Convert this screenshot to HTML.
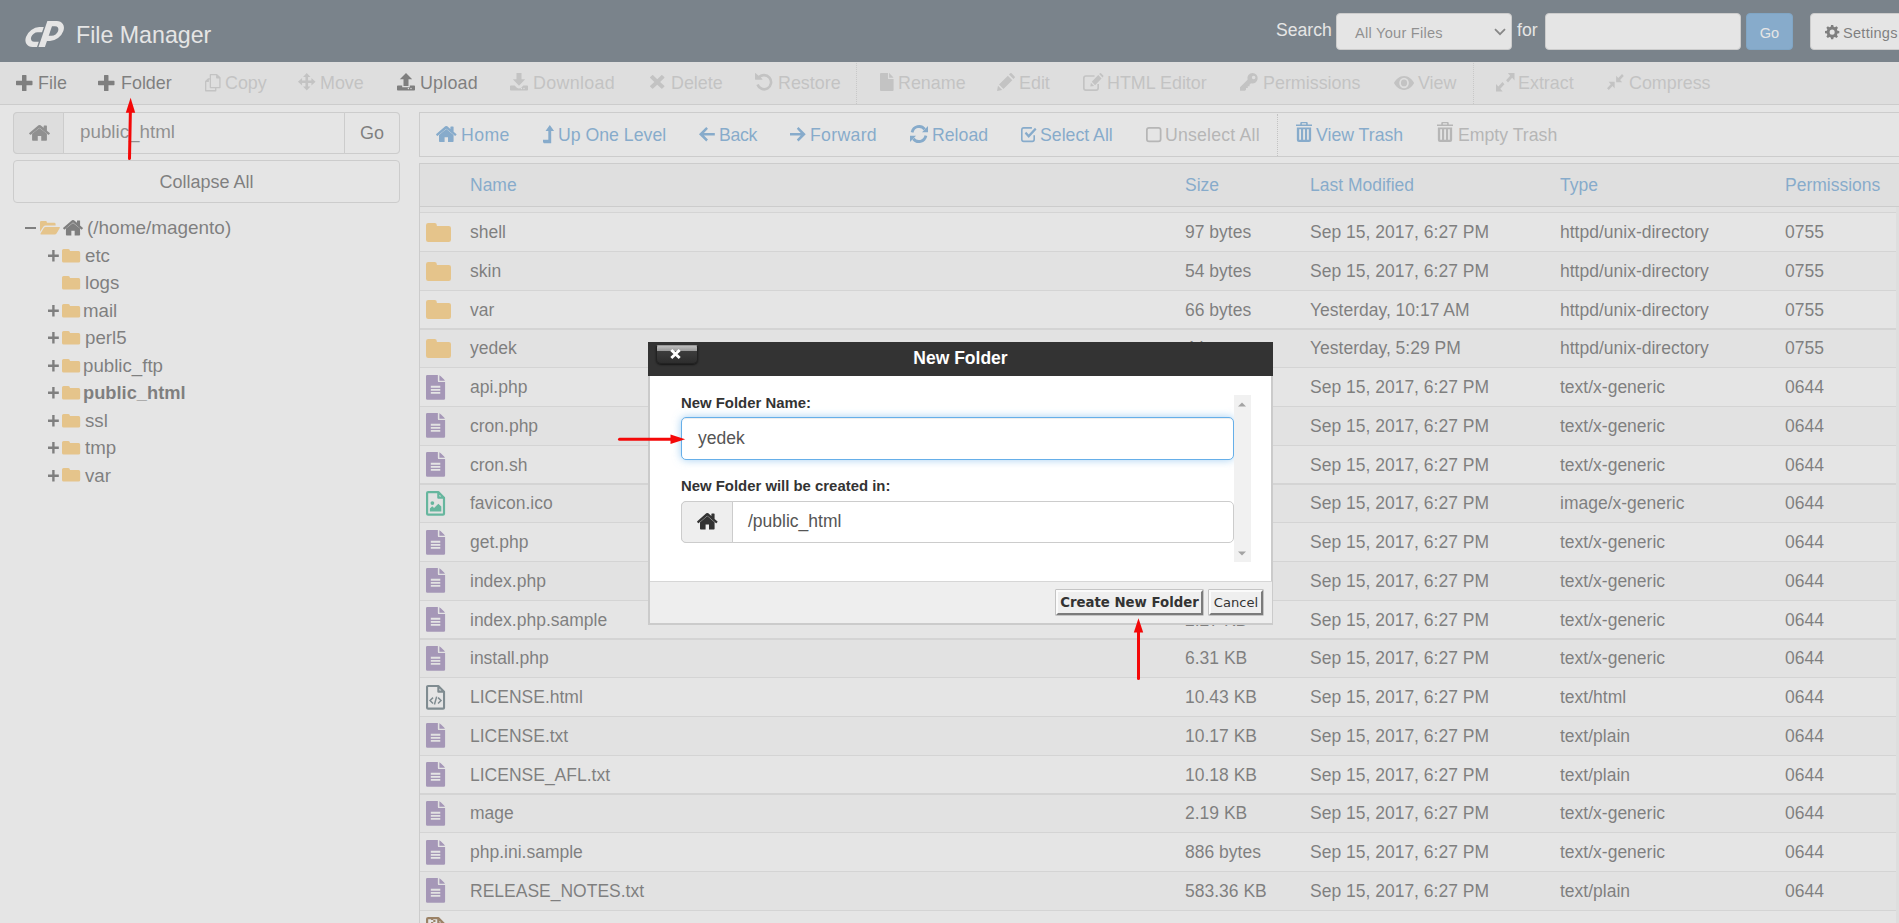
<!DOCTYPE html><html lang="en"><head><meta charset="utf-8"><title>cPanel File Manager</title><style>
*{box-sizing:border-box;margin:0;padding:0}
html,body{width:1899px;height:923px;overflow:hidden;background:#fff}
body{font-family:"Liberation Sans",sans-serif;color:#333;position:relative}
.abs{position:absolute;white-space:nowrap}
.os{font-family:"Liberation Sans",sans-serif;font-size:18px}
#hdr{left:0;top:0;width:1899px;height:62px;background:#293a4a}
#tb{left:0;top:62px;width:1899px;height:43px;background:#f1f1f1;border-bottom:1px solid #ccc}
.tbi{top:63px;height:42px;line-height:41px;font-size:17.900px;color:#333}
.tbi.dis{color:#bababa}
.nvi{top:114px;height:43px;line-height:43px;font-size:17.700px;color:#428bca}
.th{top:165px;height:42px;line-height:41px;font-size:17.500px;color:#428bca}
.row{left:420px;width:1476px;height:38.750px;border-bottom:1px solid #ddd}
.row.odd{background:#f9f9f9}
.c{position:absolute;top:0px;height:37.750px;line-height:38px;font-size:17.500px;white-space:nowrap;color:#333}
.tr{font-size:18.700px;height:27px;line-height:27px;color:#333}
svg{display:block;overflow:visible}
</style></head><body>
<div id="hdr" class="abs">
<svg width="38" height="26" viewBox="0 0 38 26" style="position:absolute;left:25.800px;top:20.500px"><g transform="translate(0,26) skewX(-18.800) translate(0,-26)" fill="none" stroke="#fff"><path d="M11 8.700H6.550A7.350 7.350 0 0 0 6.550 23.400H11" stroke-width="5.200"/><path d="M15.700 0V26" stroke-width="6.400"/><path d="M15.700 2.600H21.900A7.400 7.400 0 0 1 21.900 17.400H17" stroke-width="5.200"/></g></svg>
<div class="abs" style="left:76px;top:14px;height:42px;line-height:42px;font-size:23.200px;color:#fff">File Manager</div>
<div class="abs" style="left:1276px;top:11px;height:38px;line-height:38px;font-size:17.600px;color:#fff">Search</div>
<div class="abs" style="left:1336px;top:13px;width:176px;height:37px;background:#fff;border:1px solid #ccc;border-radius:4px"></div>
<div class="abs" style="left:1355px;top:15px;height:37px;line-height:37px;font-size:14.600px;letter-spacing:.25px;color:#555">All Your Files</div>
<svg width="12" height="8" viewBox="0 0 12 8" style="position:absolute;left:1494px;top:28px"><path d="M1 1.200l5 5 5-5" fill="none" stroke="#444" stroke-width="1.800"/></svg>
<div class="abs" style="left:1517px;top:11px;height:38px;line-height:38px;font-size:17.600px;color:#fff">for</div>
<div class="abs" style="left:1545px;top:13px;width:196px;height:37px;background:#fff;border:1px solid #ccc;border-radius:4px"></div>
<div class="abs" style="left:1746px;top:13px;width:47px;height:37px;background:#428bca;border:1px solid #357ebd;border-radius:4px;color:#fff;font-size:14.600px;line-height:38px;text-align:center">Go</div>
<div class="abs" style="left:1810px;top:13px;width:100px;height:37px;background:#fff;border:1px solid #ccc;border-radius:4px"></div>
<svg width="14.3" height="14.3" viewBox="0.10 0.10 15.80 15.80" preserveAspectRatio="none" style="position:absolute;left:1824.8px;top:24.8px;color:#333;"><path fill="currentColor" fill-rule="evenodd" d="M6.80 0.09L9.20 0.09L9.57 2.11L11.06 2.72L12.75 1.56L14.44 3.25L13.28 4.94L13.89 6.43L15.91 6.80L15.91 9.20L13.89 9.57L13.28 11.06L14.44 12.75L12.75 14.44L11.06 13.28L9.57 13.89L9.20 15.91L6.80 15.91L6.43 13.89L4.94 13.28L3.25 14.44L1.56 12.75L2.72 11.06L2.11 9.57L0.09 9.20L0.09 6.80L2.11 6.43L2.72 4.94L1.56 3.25L3.25 1.56L4.94 2.72L6.43 2.11zM8 5.200a2.800 2.800 0 1 0 0 5.600 2.800 2.800 0 1 0 0-5.600z"/></svg>
<div class="abs" style="left:1843px;top:15px;height:37px;line-height:37px;font-size:14.600px;letter-spacing:.25px;color:#333">Settings</div>
</div>
<div id="tb" class="abs"></div>
<svg width="16.5" height="16" viewBox="1.00 1.00 14.00 14.00" preserveAspectRatio="none" style="position:absolute;left:16.4px;top:74.7px;color:#333;"><path fill="currentColor" d="M6.600 1h2.800a.5.5 0 0 1 .5.5v4.600h4.600a.5.5 0 0 1 .5.5v2.800a.5.5 0 0 1-.5.5h-4.600v4.600a.5.5 0 0 1-.5.5H6.600a.5.5 0 0 1-.5-.5v-4.600H1.500a.5.5 0 0 1-.5-.5V6.600a.5.5 0 0 1 .5-.5h4.600V1.500a.5.5 0 0 1 .5-.5z"/></svg>
<div class="abs tbi" style="left:38px">File</div>
<svg width="16.5" height="16" viewBox="1.00 1.00 14.00 14.00" preserveAspectRatio="none" style="position:absolute;left:98.4px;top:74.7px;color:#333;"><path fill="currentColor" d="M6.600 1h2.800a.5.5 0 0 1 .5.5v4.600h4.600a.5.5 0 0 1 .5.5v2.800a.5.5 0 0 1-.5.5h-4.600v4.600a.5.5 0 0 1-.5.5H6.600a.5.5 0 0 1-.5-.5v-4.600H1.500a.5.5 0 0 1-.5-.5V6.600a.5.5 0 0 1 .5-.5h4.600V1.500a.5.5 0 0 1 .5-.5z"/></svg>
<div class="abs tbi" style="left:121px">Folder</div>
<svg width="15.6" height="17.4" viewBox="0.00 0.00 15.40 17.65" preserveAspectRatio="none" style="position:absolute;left:205px;top:73.5px;color:#bababa;"><path fill="none" stroke="currentColor" stroke-width="1.300" stroke-linejoin="round" d="M5.300.650H11.600L14.750 3.800V13.750H5.300zM11.600.650V3.800H14.750M5.300 4.900H3.200L.650 7.500V17H10.600V13.750M3.200 4.900V7.500H.650"/></svg>
<div class="abs tbi dis" style="left:225px">Copy</div>
<svg width="17.5" height="17.5" viewBox="0.05 0.05 17.40 17.40" preserveAspectRatio="none" style="position:absolute;left:298.2px;top:73.2px;color:#bababa;"><path fill="currentColor" d="M8.750 0l3.700 4.100h-2.400v3.350h3.350v-2.400l4.100 3.700-4.100 3.700v-2.400h-3.350v3.350h2.400l-3.700 4.100-3.700-4.100h2.400v-3.350H4.100v2.400L0 8.750l4.100-3.700v2.400h3.350V4.100h-2.400z"/></svg>
<div class="abs tbi dis" style="left:320px">Move</div>
<svg width="18" height="17.5" viewBox="0.00 0.05 18.00 17.45" preserveAspectRatio="none" style="position:absolute;left:397px;top:73.4px;color:#333;"><path fill="currentColor" d="M9 0l6.200 6.300h-3.700v6.600h-5V6.300H2.800z"/><path fill="currentColor" d="M.8 12.400h4.400v1.800h7.600v-1.800h4.400q.8 0 .8.800v3.500q0 .8-.8.800H.8q-.8 0-.8-.8v-3.500q0-.8.8-.8zm12.500 3.100a.7.700 0 1 0 1.400 0 .7.700 0 1 0-1.400 0zm-2.600 0a.7.700 0 1 0 1.400 0 .7.700 0 1 0-1.400 0z" fill-rule="evenodd"/></svg>
<div class="abs tbi" style="left:420px;letter-spacing:0.20px">Upload</div>
<svg width="18" height="17.5" viewBox="0.00 0.00 18.00 17.50" preserveAspectRatio="none" style="position:absolute;left:510px;top:73.4px;color:#bababa;"><path fill="currentColor" d="M6.500 0h5v6.300h3.700L9 12.800 2.800 6.300h3.700z"/><path fill="currentColor" d="M.8 12.400h3.800l2.300 2.300q2.100 1.600 4.200 0l2.300-2.300h3.800q.8 0 .8.800v3.500q0 .8-.8.800H.8q-.8 0-.8-.8v-3.500q0-.8.8-.8zm12.500 3.100a.7.700 0 1 0 1.400 0 .7.700 0 1 0-1.400 0zm-2.600 0a.7.700 0 1 0 1.400 0 .7.700 0 1 0-1.400 0z" fill-rule="evenodd"/></svg>
<div class="abs tbi dis" style="left:533px;letter-spacing:0.30px">Download</div>
<svg width="14.5" height="13.8" viewBox="0.25 0.25 15.50 15.50" preserveAspectRatio="none" style="position:absolute;left:649.8px;top:75.2px;color:#bababa;"><path fill="currentColor" d="M3.600.5L8 4.900 12.400.5q.5-.5 1 0l2.100 2.100q.5.500 0 1L11.100 8l4.400 4.400q.5.500 0 1l-2.100 2.100q-.5.500-1 0L8 11.100l-4.400 4.400q-.5.500-1 0L.5 13.400q-.5-.5 0-1L4.900 8 .5 3.600q-.5-.5 0-1L2.600.5q.5-.5 1 0z"/></svg>
<div class="abs tbi dis" style="left:671px">Delete</div>
<svg width="17.4" height="17.6" viewBox="0.40 0.80 16.50 16.40" preserveAspectRatio="none" style="position:absolute;left:754.7px;top:73px;color:#bababa;"><path fill="none" stroke="currentColor" stroke-width="2.500" d="M3.900 5.200A6.600 6.600 0 1 1 2.800 11.500"/><path fill="currentColor" d="M.400 1.300q0-.8.700-.300L7.400 6.500q.4.500-.3.500H.900q-.5 0-.5-.5z"/></svg>
<div class="abs tbi dis" style="left:778px">Restore</div>
<svg width="13.6" height="18" viewBox="0.00 0.00 13.00 16.00" preserveAspectRatio="none" style="position:absolute;left:880px;top:73px;color:#bababa;"><path fill="currentColor" d="M.9 0h6.700v4.600q0 .8.800.8H13v9.700q0 .9-.9.900H.9q-.9 0-.9-.9V.9Q0 0 .9 0z"/><path fill="currentColor" d="M8.700.1q.5.200 1 .7l2.500 2.500q.5.500.7 1H8.700z"/></svg>
<div class="abs tbi dis" style="left:898px">Rename</div>
<svg width="18" height="18" viewBox="0.00 0.10 15.90 15.90" preserveAspectRatio="none" style="position:absolute;left:997px;top:73px;color:#bababa;"><path fill="currentColor" d="M0 16l.9-4.600 3.700 3.700zM1.800 10.300l7.800-7.800 3.900 3.900-7.800 7.800zM10.600 1.500l1.100-1.100q.6-.6 1.200 0l2.700 2.700q.6.600 0 1.200l-1.100 1.100z"/></svg>
<div class="abs tbi dis" style="left:1019px">Edit</div>
<svg width="20.5" height="18" viewBox="0.05 0.05 18.60 15.80" preserveAspectRatio="none" style="position:absolute;left:1083px;top:73px;color:#bababa;"><path fill="none" stroke="currentColor" stroke-width="1.500" d="M13.800 9.800v3.400q0 1.900-1.900 1.900H2.700q-1.900 0-1.900-1.900V4.600q0-1.900 1.900-1.900h7.800"/><path fill="currentColor" d="M6.700 11.800l.5-3.300 3 3zM8 7.700l5.900-5.900 3 3L11 10.700zM14.700 1l.7-.7q.5-.5 1 0l2 2q.5.500 0 1l-.7.700z"/></svg>
<div class="abs tbi dis" style="left:1107px">HTML Editor</div>
<svg width="17.7" height="17.8" viewBox="0.00 0.00 15.95 16.00" preserveAspectRatio="none" style="position:absolute;left:1240.3px;top:73.2px;color:#bababa;"><path fill="currentColor" fill-rule="evenodd" d="M11.300 0a4.700 4.700 0 1 1-1.400 9.200L8.600 10.500v1.400H7v1.600H5.400v1.600l-.9.900H.600Q0 16 0 15.400v-2.600l6.800-6.800A4.700 4.700 0 0 1 11.300 0zm1 2.500a1.600 1.600 0 1 0 0 3.200 1.600 1.600 0 1 0 0-3.200z"/></svg>
<div class="abs tbi dis" style="left:1263px">Permissions</div>
<svg width="20.1" height="13.9" viewBox="0.20 0.80 19.60 12.40" preserveAspectRatio="none" style="position:absolute;left:1393.9px;top:75.5px;color:#bababa;"><path fill="currentColor" fill-rule="evenodd" d="M10 .8C14.400.8 18.200 3.900 19.800 7 18.200 10.100 14.400 13.200 10 13.200S1.800 10.100.200 7C1.800 3.900 5.600.8 10 .8zM10 2.300a4.700 4.700 0 1 0 0 9.400 4.700 4.700 0 1 0 0-9.400zM10 4a3 3 0 1 1 0 6 3 3 0 1 1 0-6z"/></svg>
<div class="abs tbi dis" style="left:1418px">View</div>
<svg width="18.5" height="18.4" viewBox="0.00 0.00 18.00 16.00" preserveAspectRatio="none" style="position:absolute;left:1495.9px;top:72.6px;color:#bababa;"><path fill="currentColor" d="M11.500 0H18v6.500l-2.300-2.300-4 4-1.900-1.900 4-4zM6.500 16H0V9.500l2.300 2.300 4-4 1.900 1.900-4 4z"/></svg>
<div class="abs tbi dis" style="left:1518px">Extract</div>
<svg width="16.8" height="16.1" viewBox="0.00 0.00 18.00 16.00" preserveAspectRatio="none" style="position:absolute;left:1607.2px;top:73.9px;color:#bababa;"><path fill="currentColor" d="M9.800 8.200V1.700l2.300 2.300 4-4L18 1.900l-4 4 2.300 2.300zM8.200 7.800v6.500l-2.300-2.300-4 4L0 14.100l4-4-2.300-2.300z"/></svg>
<div class="abs tbi dis" style="left:1629px">Compress</div>
<div class="abs" style="left:856px;top:63px;width:0;height:41px;border-left:1px dotted #c4c4c4"></div>
<div class="abs" style="left:1473px;top:63px;width:0;height:41px;border-left:1px dotted #c4c4c4"></div>
<div class="abs" style="left:13px;top:112px;width:387px;height:42px;border:1px solid #ccc;border-radius:4px;background:#fff"></div>
<div class="abs" style="left:13px;top:112px;width:51px;height:42px;border:1px solid #ccc;border-radius:4px 0 0 4px;background:#eee"></div>
<svg width="21" height="15.8" viewBox="0.95 0.60 18.10 14.40" preserveAspectRatio="none" style="position:absolute;left:28.6px;top:124.7px;color:#555;"><path fill="currentColor" d="M10 3.300l6.400 5.300v5.700q0 .7-.7.700h-4.200v-4.300h-3v4.300H4.300q-.7 0-.7-.7V8.600z"/><path fill="currentColor" d="M10 .6q.5 0 .9.300l2.700 2.300V1.400q0-.4.400-.4h2q.4 0 .4.400v4.400l2.400 2q.4.300.1.700l-.7.800q-.3.300-.7.100L10 3 2.500 9.400q-.4.300-.7-.1l-.7-.8q-.3-.4.100-.7L9.100.9q.4-.3.900-.3z"/></svg>
<div class="abs" style="left:80px;top:112px;height:41px;line-height:39px;font-size:18.800px;color:#555">public_html</div>
<div class="abs" style="left:344px;top:112px;width:56px;height:42px;border:1px solid #ccc;border-radius:0 4px 4px 0;background:#fff;font-size:18px;line-height:41px;text-align:center;color:#333">Go</div>
<div class="abs" style="left:13px;top:160px;width:387px;height:43px;border:1px solid #ccc;border-radius:4px;background:#fff;font-size:18px;line-height:43px;text-align:center;color:#333">Collapse All</div>
<div class="abs" style="left:25px;top:226.600px;width:10.700px;height:2.500px;background:#333"></div>
<svg width="20" height="13.4" viewBox="0.00 0.80 19.50 13.40" preserveAspectRatio="none" style="position:absolute;left:40px;top:221.4px;color:#ffbc4a;"><path fill="currentColor" d="M0 2Q0 .8 1.2.8h4.300q1.200 0 1.200 1.200v.6h7.300q1.200 0 1.200 1.200v1.400H5.600q-1.600 0-2.400 1.300L0 11.500z"/><path fill="currentColor" d="M.5 13.200l3.400-5.600q.5-.9 1.600-.9h13.200q1.200 0 .6 1l-3.200 5.500q-.6 1-1.800 1H1.100q-1.100 0-.6-1z"/></svg>
<svg width="20" height="15.4" viewBox="0.95 0.60 18.10 14.40" preserveAspectRatio="none" style="position:absolute;left:63px;top:220.2px;color:#333;"><path fill="currentColor" d="M10 3.300l6.400 5.300v5.700q0 .7-.7.700h-4.200v-4.300h-3v4.300H4.300q-.7 0-.7-.7V8.600z"/><path fill="currentColor" d="M10 .6q.5 0 .9.300l2.700 2.300V1.400q0-.4.400-.4h2q.4 0 .4.400v4.400l2.400 2q.4.300.1.700l-.7.800q-.3.300-.7.100L10 3 2.500 9.400q-.4.300-.7-.1l-.7-.8q-.3-.4.100-.7L9.100.9q.4-.3.900-.3z"/></svg>
<div class="abs tr" style="left:87px;top:214px;font-size:18.950px">(/home/magento)</div>
<svg width="11" height="12" viewBox="0 0 11 12" style="position:absolute;left:48px;top:250.10px"><path d="M0 5.800h10.800M5.400 0v11.600" stroke="#333" stroke-width="2.400" fill="none"/></svg>
<svg width="18.2" height="13.6" viewBox="0.00 0.60 18.00 13.80" preserveAspectRatio="none" style="position:absolute;left:62px;top:248.80px;color:#ffbc4a;"><path fill="currentColor" d="M0 2.2Q0 .6 1.6.6h4.6q1.6 0 1.6 1.6v.5h8.6q1.6 0 1.6 1.6v8.5q0 1.6-1.6 1.6H1.6Q0 14.4 0 12.8z"/></svg>
<div class="abs tr" style="left:85px;top:242px;">etc</div>
<svg width="18.2" height="13.6" viewBox="0.00 0.60 18.00 13.80" preserveAspectRatio="none" style="position:absolute;left:62px;top:276.25px;color:#ffbc4a;"><path fill="currentColor" d="M0 2.2Q0 .6 1.6.6h4.6q1.6 0 1.6 1.6v.5h8.6q1.6 0 1.6 1.6v8.5q0 1.6-1.6 1.6H1.6Q0 14.4 0 12.8z"/></svg>
<div class="abs tr" style="left:85px;top:269px;">logs</div>
<svg width="11" height="12" viewBox="0 0 11 12" style="position:absolute;left:48px;top:305.00px"><path d="M0 5.800h10.800M5.400 0v11.600" stroke="#333" stroke-width="2.400" fill="none"/></svg>
<svg width="18.2" height="13.6" viewBox="0.00 0.60 18.00 13.80" preserveAspectRatio="none" style="position:absolute;left:62px;top:303.70px;color:#ffbc4a;"><path fill="currentColor" d="M0 2.2Q0 .6 1.6.6h4.6q1.6 0 1.6 1.6v.5h8.6q1.6 0 1.6 1.6v8.5q0 1.6-1.6 1.6H1.6Q0 14.4 0 12.8z"/></svg>
<div class="abs tr" style="left:83px;top:297px;">mail</div>
<svg width="11" height="12" viewBox="0 0 11 12" style="position:absolute;left:48px;top:332.45px"><path d="M0 5.800h10.800M5.400 0v11.600" stroke="#333" stroke-width="2.400" fill="none"/></svg>
<svg width="18.2" height="13.6" viewBox="0.00 0.60 18.00 13.80" preserveAspectRatio="none" style="position:absolute;left:62px;top:331.15px;color:#ffbc4a;"><path fill="currentColor" d="M0 2.2Q0 .6 1.6.6h4.6q1.6 0 1.6 1.6v.5h8.6q1.6 0 1.6 1.6v8.5q0 1.6-1.6 1.6H1.6Q0 14.4 0 12.8z"/></svg>
<div class="abs tr" style="left:85px;top:324px;">perl5</div>
<svg width="11" height="12" viewBox="0 0 11 12" style="position:absolute;left:48px;top:359.90px"><path d="M0 5.800h10.800M5.400 0v11.600" stroke="#333" stroke-width="2.400" fill="none"/></svg>
<svg width="18.2" height="13.6" viewBox="0.00 0.60 18.00 13.80" preserveAspectRatio="none" style="position:absolute;left:62px;top:358.60px;color:#ffbc4a;"><path fill="currentColor" d="M0 2.2Q0 .6 1.6.6h4.6q1.6 0 1.6 1.6v.5h8.6q1.6 0 1.6 1.6v8.5q0 1.6-1.6 1.6H1.6Q0 14.4 0 12.8z"/></svg>
<div class="abs tr" style="left:83px;top:352px;">public_ftp</div>
<svg width="11" height="12" viewBox="0 0 11 12" style="position:absolute;left:48px;top:387.35px"><path d="M0 5.800h10.800M5.400 0v11.600" stroke="#333" stroke-width="2.400" fill="none"/></svg>
<svg width="18.2" height="13.6" viewBox="0.00 0.60 18.00 13.80" preserveAspectRatio="none" style="position:absolute;left:62px;top:386.05px;color:#ffbc4a;"><path fill="currentColor" d="M0 2.2Q0 .6 1.6.6h4.6q1.6 0 1.6 1.6v.5h8.6q1.6 0 1.6 1.6v8.5q0 1.6-1.6 1.6H1.6Q0 14.4 0 12.8z"/></svg>
<div class="abs tr" style="left:83px;top:379px;font-weight:bold;font-size:18.300px;">public_html</div>
<svg width="11" height="12" viewBox="0 0 11 12" style="position:absolute;left:48px;top:414.80px"><path d="M0 5.800h10.800M5.400 0v11.600" stroke="#333" stroke-width="2.400" fill="none"/></svg>
<svg width="18.2" height="13.6" viewBox="0.00 0.60 18.00 13.80" preserveAspectRatio="none" style="position:absolute;left:62px;top:413.50px;color:#ffbc4a;"><path fill="currentColor" d="M0 2.2Q0 .6 1.6.6h4.6q1.6 0 1.6 1.6v.5h8.6q1.6 0 1.6 1.6v8.5q0 1.6-1.6 1.6H1.6Q0 14.4 0 12.8z"/></svg>
<div class="abs tr" style="left:85px;top:407px;">ssl</div>
<svg width="11" height="12" viewBox="0 0 11 12" style="position:absolute;left:48px;top:442.25px"><path d="M0 5.800h10.800M5.400 0v11.600" stroke="#333" stroke-width="2.400" fill="none"/></svg>
<svg width="18.2" height="13.6" viewBox="0.00 0.60 18.00 13.80" preserveAspectRatio="none" style="position:absolute;left:62px;top:440.95px;color:#ffbc4a;"><path fill="currentColor" d="M0 2.2Q0 .6 1.6.6h4.6q1.6 0 1.6 1.6v.5h8.6q1.6 0 1.6 1.6v8.5q0 1.6-1.6 1.6H1.6Q0 14.4 0 12.8z"/></svg>
<div class="abs tr" style="left:85px;top:434px;">tmp</div>
<svg width="11" height="12" viewBox="0 0 11 12" style="position:absolute;left:48px;top:469.70px"><path d="M0 5.800h10.800M5.400 0v11.600" stroke="#333" stroke-width="2.400" fill="none"/></svg>
<svg width="18.2" height="13.6" viewBox="0.00 0.60 18.00 13.80" preserveAspectRatio="none" style="position:absolute;left:62px;top:468.40px;color:#ffbc4a;"><path fill="currentColor" d="M0 2.2Q0 .6 1.6.6h4.6q1.6 0 1.6 1.6v.5h8.6q1.6 0 1.6 1.6v8.5q0 1.6-1.6 1.6H1.6Q0 14.4 0 12.8z"/></svg>
<div class="abs tr" style="left:85px;top:462px;">var</div>
<div class="abs" style="left:419px;top:112px;width:1500px;height:45px;border:1px solid #ccc;background:#fff"></div>
<svg width="20.6" height="16" viewBox="0.95 0.60 18.10 14.40" preserveAspectRatio="none" style="position:absolute;left:436.3px;top:126.2px;color:#428bca;"><path fill="currentColor" d="M10 3.300l6.400 5.300v5.700q0 .7-.7.700h-4.200v-4.300h-3v4.300H4.300q-.7 0-.7-.7V8.600z"/><path fill="currentColor" d="M10 .6q.5 0 .9.300l2.700 2.300V1.400q0-.4.400-.4h2q.4 0 .4.400v4.400l2.400 2q.4.300.1.700l-.7.800q-.3.300-.7.100L10 3 2.500 9.400q-.4.300-.7-.1l-.7-.8q-.3-.4.100-.7L9.100.9q.4-.3.900-.3z"/></svg>
<div class="abs nvi" style="left:461px;color:#428bca;letter-spacing:0.40px">Home</div>
<svg width="11.1" height="18.3" viewBox="0.00 0.05 11.90 17.15" preserveAspectRatio="none" style="position:absolute;left:542.8px;top:124.7px;color:#428bca;"><path fill="currentColor" d="M7.300 0l4.600 5.600H8.800v11.600H.9L0 16.100v-2.200h5.700V5.600H2.700z"/></svg>
<div class="abs nvi" style="left:558px;color:#428bca">Up One Level</div>
<svg width="15.8" height="14.4" viewBox="0.45 0.40 17.55 15.20" preserveAspectRatio="none" style="position:absolute;left:699px;top:127.1px;color:#428bca;"><path fill="currentColor" d="M18 6.700v2.600H6l4.400 4.400-1.900 1.900L.4 8 8.500.4l1.900 1.900L6 6.700z"/></svg>
<div class="abs nvi" style="left:719px;color:#428bca;letter-spacing:-0.30px">Back</div>
<svg width="15.7" height="14.4" viewBox="0.00 0.40 17.55 15.20" preserveAspectRatio="none" style="position:absolute;left:789.9px;top:127.1px;color:#428bca;"><path fill="currentColor" d="M0 6.700v2.600h12l-4.400 4.400 1.900 1.900L17.600 8 9.500.4 7.600 2.300 12 6.700z"/></svg>
<div class="abs nvi" style="left:810px;color:#428bca;letter-spacing:0.30px">Forward</div>
<svg width="18" height="18" viewBox="0.30 -0.25 17.40 16.50" preserveAspectRatio="none" style="position:absolute;left:909.6px;top:125.2px;color:#428bca;"><path fill="none" stroke="currentColor" stroke-width="2.700" d="M2.300 6.500A7 7 0 0 1 14.500 3.600M15.700 9.500A7 7 0 0 1 3.500 12.400"/><path fill="currentColor" d="M17.700.6v5.800h-5.800zM.3 15.400V9.600h5.800z"/></svg>
<div class="abs nvi" style="left:932px;color:#428bca">Reload</div>
<svg width="15.5" height="15.3" viewBox="0.50 1.30 15.50 14.00" preserveAspectRatio="none" style="position:absolute;left:1020.6px;top:126.5px;color:#428bca;"><path fill="none" stroke="currentColor" stroke-width="1.600" d="M13.700 8.800v3.800q0 1.900-1.900 1.900H3.200q-1.900 0-1.900-1.900V4q0-1.900 1.900-1.900h8.200"/><path fill="currentColor" d="M4.200 7.200l1.500-1.500 2.500 2.500L14.500 2 16 3.500 8.200 11.300z"/></svg>
<div class="abs nvi" style="left:1040px;color:#428bca">Select All</div>
<svg width="15.5" height="15.3" viewBox="0.50 1.10 14.20 14.20" preserveAspectRatio="none" style="position:absolute;left:1145.5px;top:126.5px;color:#a0a0a0;"><rect x="1.300" y="1.900" width="12.600" height="12.600" rx="2" fill="none" stroke="currentColor" stroke-width="1.600"/></svg>
<div class="abs nvi" style="left:1165px;color:#a0a0a0;letter-spacing:0.20px">Unselect All</div>
<svg width="16" height="20" viewBox="0.00 0.00 15.00 20.00" preserveAspectRatio="none" style="position:absolute;left:1295.7px;top:121.9px;color:#428bca;"><path fill="currentColor" fill-rule="evenodd" d="M5 0h5q1 0 1 1v1.500h4V4H0V2.500h4V1q0-1 1-1zm.5 1.200v1.300h4V1.200zM.8 5.500h13.400V18q0 2-2 2H2.800q-2 0-2-2zM3 7.300v10.500h1.700V7.300zm3.700 0v10.500h1.700V7.300zm3.700 0v10.500H12V7.300z"/></svg>
<div class="abs nvi" style="left:1316px;color:#428bca">View Trash</div>
<svg width="16" height="20" viewBox="0.00 0.00 15.00 20.00" preserveAspectRatio="none" style="position:absolute;left:1437px;top:121.9px;color:#a0a0a0;"><path fill="currentColor" fill-rule="evenodd" d="M5 0h5q1 0 1 1v1.500h4V4H0V2.500h4V1q0-1 1-1zm.5 1.200v1.300h4V1.200zM.8 5.500h13.400V18q0 2-2 2H2.800q-2 0-2-2zM3 7.300v10.500h1.700V7.300zm3.700 0v10.500h1.700V7.300zm3.700 0v10.500H12V7.300z"/></svg>
<div class="abs nvi" style="left:1458px;color:#a0a0a0">Empty Trash</div>
<div class="abs" style="left:1277px;top:114px;width:0;height:42px;border-left:1px dotted #bbb"></div>
<div class="abs" style="left:419px;top:163px;width:1500px;height:44px;border:1px solid #ccc;background:#f3f3f3"></div>
<div class="abs th" style="left:470px">Name</div>
<div class="abs th" style="left:1185px">Size</div>
<div class="abs th" style="left:1310px">Last Modified</div>
<div class="abs th" style="left:1560px">Type</div>
<div class="abs th" style="left:1785px">Permissions</div>
<div class="abs" style="left:419px;top:207px;width:1px;height:716px;background:#ccc"></div>
<div class="abs" style="left:420px;top:207px;width:1479px;height:6px;background:#f9f9f9;border-bottom:1px solid #ddd"></div>
<div class="abs row" style="top:213px;height:39px">
<svg width="25" height="19" viewBox="0.00 0.60 18.00 13.80" preserveAspectRatio="none" style="position:absolute;left:6.1px;top:9.90px;color:#ffbc4a;"><path fill="currentColor" d="M0 2.2Q0 .6 1.6.6h4.6q1.6 0 1.6 1.6v.5h8.6q1.6 0 1.6 1.6v8.5q0 1.6-1.6 1.6H1.6Q0 14.4 0 12.8z"/></svg>
<div class="c" style="left:50px">shell</div>
<div class="c" style="left:765px">97 bytes</div>
<div class="c" style="left:890px">Sep 15, 2017, 6:27 PM</div>
<div class="c" style="left:1140px">httpd/unix-directory</div>
<div class="c" style="left:1365px">0755</div>
</div>
<div class="abs row odd" style="top:252px;height:39px">
<svg width="25" height="19" viewBox="0.00 0.60 18.00 13.80" preserveAspectRatio="none" style="position:absolute;left:6.1px;top:9.65px;color:#ffbc4a;"><path fill="currentColor" d="M0 2.2Q0 .6 1.6.6h4.6q1.6 0 1.6 1.6v.5h8.6q1.6 0 1.6 1.6v8.5q0 1.6-1.6 1.6H1.6Q0 14.4 0 12.8z"/></svg>
<div class="c" style="left:50px">skin</div>
<div class="c" style="left:765px">54 bytes</div>
<div class="c" style="left:890px">Sep 15, 2017, 6:27 PM</div>
<div class="c" style="left:1140px">httpd/unix-directory</div>
<div class="c" style="left:1365px">0755</div>
</div>
<div class="abs row" style="top:291px;height:38px">
<svg width="25" height="19" viewBox="0.00 0.60 18.00 13.80" preserveAspectRatio="none" style="position:absolute;left:6.1px;top:9.40px;color:#ffbc4a;"><path fill="currentColor" d="M0 2.2Q0 .6 1.6.6h4.6q1.6 0 1.6 1.6v.5h8.6q1.6 0 1.6 1.6v8.5q0 1.6-1.6 1.6H1.6Q0 14.4 0 12.8z"/></svg>
<div class="c" style="left:50px">var</div>
<div class="c" style="left:765px">66 bytes</div>
<div class="c" style="left:890px">Yesterday, 10:17 AM</div>
<div class="c" style="left:1140px">httpd/unix-directory</div>
<div class="c" style="left:1365px">0755</div>
</div>
<div class="abs row odd" style="top:329px;height:39px">
<div style="position:absolute;left:0;top:0;width:100%;height:1px;background:#ddd"></div>
<svg width="25" height="19" viewBox="0.00 0.60 18.00 13.80" preserveAspectRatio="none" style="position:absolute;left:6.1px;top:10.15px;color:#ffbc4a;"><path fill="currentColor" d="M0 2.2Q0 .6 1.6.6h4.6q1.6 0 1.6 1.6v.5h8.6q1.6 0 1.6 1.6v8.5q0 1.6-1.6 1.6H1.6Q0 14.4 0 12.8z"/></svg>
<div class="c" style="left:50px">yedek</div>
<div class="c" style="left:765px">4 bytes</div>
<div class="c" style="left:890px">Yesterday, 5:29 PM</div>
<div class="c" style="left:1140px">httpd/unix-directory</div>
<div class="c" style="left:1365px">0755</div>
</div>
<div class="abs row" style="top:368px;height:39px">
<svg width="19.1" height="24.7" viewBox="0.00 0.00 19.00 25.00" preserveAspectRatio="none" style="position:absolute;left:6.4px;top:6.70px;color:#7f63a3;"><path fill="currentColor" fill-rule="evenodd" d="M1.200 0h10.600v6q0 1.200 1.200 1.200H19v16.600q0 1.200-1.200 1.200H1.200Q0 25 0 23.800V1.200Q0 0 1.200 0zM4.800 11v1.800h9.400V11zm0 3.100v1.800h9.400v-1.800zm0 3.200v1.800h9.400v-1.800z"/><path fill="currentColor" d="M13.300.2q.7.300 1.400 1l3.100 3.100q.7.700 1 1.400h-5.500z"/></svg>
<div class="c" style="left:50px">api.php</div>
<div class="c" style="left:765px">2.83 KB</div>
<div class="c" style="left:890px">Sep 15, 2017, 6:27 PM</div>
<div class="c" style="left:1140px">text/x-generic</div>
<div class="c" style="left:1365px">0644</div>
</div>
<div class="abs row odd" style="top:407px;height:39px">
<svg width="19.1" height="24.7" viewBox="0.00 0.00 19.00 25.00" preserveAspectRatio="none" style="position:absolute;left:6.4px;top:6.45px;color:#7f63a3;"><path fill="currentColor" fill-rule="evenodd" d="M1.200 0h10.600v6q0 1.200 1.200 1.200H19v16.600q0 1.200-1.200 1.200H1.200Q0 25 0 23.800V1.200Q0 0 1.200 0zM4.800 11v1.800h9.400V11zm0 3.100v1.800h9.400v-1.800zm0 3.200v1.800h9.400v-1.800z"/><path fill="currentColor" d="M13.300.2q.7.300 1.400 1l3.100 3.100q.7.700 1 1.400h-5.500z"/></svg>
<div class="c" style="left:50px">cron.php</div>
<div class="c" style="left:765px">2.35 KB</div>
<div class="c" style="left:890px">Sep 15, 2017, 6:27 PM</div>
<div class="c" style="left:1140px">text/x-generic</div>
<div class="c" style="left:1365px">0644</div>
</div>
<div class="abs row" style="top:446px;height:38px">
<svg width="19.1" height="24.7" viewBox="0.00 0.00 19.00 25.00" preserveAspectRatio="none" style="position:absolute;left:6.4px;top:6.20px;color:#7f63a3;"><path fill="currentColor" fill-rule="evenodd" d="M1.200 0h10.600v6q0 1.200 1.200 1.200H19v16.600q0 1.200-1.200 1.200H1.200Q0 25 0 23.800V1.200Q0 0 1.200 0zM4.800 11v1.800h9.400V11zm0 3.100v1.800h9.400v-1.800zm0 3.200v1.800h9.400v-1.800z"/><path fill="currentColor" d="M13.300.2q.7.300 1.400 1l3.100 3.100q.7.700 1 1.400h-5.500z"/></svg>
<div class="c" style="left:50px">cron.sh</div>
<div class="c" style="left:765px">1.61 KB</div>
<div class="c" style="left:890px">Sep 15, 2017, 6:27 PM</div>
<div class="c" style="left:1140px">text/x-generic</div>
<div class="c" style="left:1365px">0644</div>
</div>
<div class="abs row odd" style="top:484px;height:39px">
<div style="position:absolute;left:0;top:0;width:100%;height:1px;background:#ddd"></div>
<svg width="19.1" height="24.7" viewBox="-0.10 -0.10 19.20 25.20" preserveAspectRatio="none" style="position:absolute;left:6.4px;top:6.95px;color:#00a070;"><path fill="none" stroke="currentColor" stroke-width="2.200" stroke-linejoin="round" d="M12.300 1H2Q1 1 1 2v21q0 1 1 1h15q1 0 1-1V6.700zM12.300 1v5.700H18"/><circle cx="6.300" cy="12.200" r="1.900" fill="currentColor"/><path fill="currentColor" d="M3.800 20.800v-3l2.400-2.400 1.800 1.800 4.300-4.400 3 3v5z"/></svg>
<div class="c" style="left:50px">favicon.ico</div>
<div class="c" style="left:765px">1.12 KB</div>
<div class="c" style="left:890px">Sep 15, 2017, 6:27 PM</div>
<div class="c" style="left:1140px">image/x-generic</div>
<div class="c" style="left:1365px">0644</div>
</div>
<div class="abs row" style="top:523px;height:39px">
<svg width="19.1" height="24.7" viewBox="0.00 0.00 19.00 25.00" preserveAspectRatio="none" style="position:absolute;left:6.4px;top:6.70px;color:#7f63a3;"><path fill="currentColor" fill-rule="evenodd" d="M1.200 0h10.600v6q0 1.200 1.200 1.200H19v16.600q0 1.200-1.200 1.200H1.200Q0 25 0 23.800V1.200Q0 0 1.200 0zM4.800 11v1.800h9.400V11zm0 3.100v1.800h9.400v-1.800zm0 3.200v1.800h9.400v-1.800z"/><path fill="currentColor" d="M13.300.2q.7.300 1.400 1l3.100 3.100q.7.700 1 1.400h-5.500z"/></svg>
<div class="c" style="left:50px">get.php</div>
<div class="c" style="left:765px">5.84 KB</div>
<div class="c" style="left:890px">Sep 15, 2017, 6:27 PM</div>
<div class="c" style="left:1140px">text/x-generic</div>
<div class="c" style="left:1365px">0644</div>
</div>
<div class="abs row odd" style="top:562px;height:39px">
<svg width="19.1" height="24.7" viewBox="0.00 0.00 19.00 25.00" preserveAspectRatio="none" style="position:absolute;left:6.4px;top:6.45px;color:#7f63a3;"><path fill="currentColor" fill-rule="evenodd" d="M1.200 0h10.600v6q0 1.200 1.200 1.200H19v16.600q0 1.200-1.200 1.200H1.200Q0 25 0 23.800V1.200Q0 0 1.200 0zM4.800 11v1.800h9.400V11zm0 3.100v1.800h9.400v-1.800zm0 3.200v1.800h9.400v-1.800z"/><path fill="currentColor" d="M13.300.2q.7.300 1.400 1l3.100 3.100q.7.700 1 1.400h-5.500z"/></svg>
<div class="c" style="left:50px">index.php</div>
<div class="c" style="left:765px">2.58 KB</div>
<div class="c" style="left:890px">Sep 15, 2017, 6:27 PM</div>
<div class="c" style="left:1140px">text/x-generic</div>
<div class="c" style="left:1365px">0644</div>
</div>
<div class="abs row" style="top:601px;height:38px">
<svg width="19.1" height="24.7" viewBox="0.00 0.00 19.00 25.00" preserveAspectRatio="none" style="position:absolute;left:6.4px;top:6.20px;color:#7f63a3;"><path fill="currentColor" fill-rule="evenodd" d="M1.200 0h10.600v6q0 1.200 1.200 1.200H19v16.600q0 1.200-1.200 1.200H1.200Q0 25 0 23.800V1.200Q0 0 1.200 0zM4.800 11v1.800h9.400V11zm0 3.100v1.800h9.400v-1.800zm0 3.200v1.800h9.400v-1.800z"/><path fill="currentColor" d="M13.300.2q.7.300 1.400 1l3.100 3.100q.7.700 1 1.400h-5.500z"/></svg>
<div class="c" style="left:50px">index.php.sample</div>
<div class="c" style="left:765px">2.27 KB</div>
<div class="c" style="left:890px">Sep 15, 2017, 6:27 PM</div>
<div class="c" style="left:1140px">text/x-generic</div>
<div class="c" style="left:1365px">0644</div>
</div>
<div class="abs row odd" style="top:639px;height:39px">
<div style="position:absolute;left:0;top:0;width:100%;height:1px;background:#ddd"></div>
<svg width="19.1" height="24.7" viewBox="0.00 0.00 19.00 25.00" preserveAspectRatio="none" style="position:absolute;left:6.4px;top:6.95px;color:#7f63a3;"><path fill="currentColor" fill-rule="evenodd" d="M1.200 0h10.600v6q0 1.200 1.200 1.200H19v16.600q0 1.200-1.200 1.200H1.200Q0 25 0 23.800V1.200Q0 0 1.200 0zM4.800 11v1.800h9.400V11zm0 3.100v1.800h9.400v-1.800zm0 3.200v1.800h9.400v-1.800z"/><path fill="currentColor" d="M13.300.2q.7.300 1.400 1l3.100 3.100q.7.700 1 1.400h-5.500z"/></svg>
<div class="c" style="left:50px">install.php</div>
<div class="c" style="left:765px">6.31 KB</div>
<div class="c" style="left:890px">Sep 15, 2017, 6:27 PM</div>
<div class="c" style="left:1140px">text/x-generic</div>
<div class="c" style="left:1365px">0644</div>
</div>
<div class="abs row" style="top:678px;height:39px">
<svg width="19.1" height="24.7" viewBox="-0.05 -0.05 19.10 25.10" preserveAspectRatio="none" style="position:absolute;left:6.4px;top:6.70px;color:#344c56;"><path fill="none" stroke="currentColor" stroke-width="2.100" stroke-linejoin="round" d="M12.300 1H2Q1 1 1 2v21q0 1 1 1h15q1 0 1-1V6.700zM12.300 1v5.700H18"/><path fill="none" stroke="currentColor" stroke-width="1.500" d="M7 12.800l-3 3 3 3M12 12.800l3 3-3 3M10.600 11.800l-2.200 8"/></svg>
<div class="c" style="left:50px">LICENSE.html</div>
<div class="c" style="left:765px">10.43 KB</div>
<div class="c" style="left:890px">Sep 15, 2017, 6:27 PM</div>
<div class="c" style="left:1140px">text/html</div>
<div class="c" style="left:1365px">0644</div>
</div>
<div class="abs row odd" style="top:717px;height:39px">
<svg width="19.1" height="24.7" viewBox="0.00 0.00 19.00 25.00" preserveAspectRatio="none" style="position:absolute;left:6.4px;top:6.45px;color:#7f63a3;"><path fill="currentColor" fill-rule="evenodd" d="M1.200 0h10.600v6q0 1.200 1.200 1.200H19v16.600q0 1.200-1.200 1.200H1.200Q0 25 0 23.800V1.200Q0 0 1.200 0zM4.800 11v1.800h9.400V11zm0 3.100v1.800h9.400v-1.800zm0 3.200v1.800h9.400v-1.800z"/><path fill="currentColor" d="M13.300.2q.7.300 1.400 1l3.100 3.100q.7.700 1 1.400h-5.500z"/></svg>
<div class="c" style="left:50px">LICENSE.txt</div>
<div class="c" style="left:765px">10.17 KB</div>
<div class="c" style="left:890px">Sep 15, 2017, 6:27 PM</div>
<div class="c" style="left:1140px">text/plain</div>
<div class="c" style="left:1365px">0644</div>
</div>
<div class="abs row" style="top:756px;height:38px">
<svg width="19.1" height="24.7" viewBox="0.00 0.00 19.00 25.00" preserveAspectRatio="none" style="position:absolute;left:6.4px;top:6.20px;color:#7f63a3;"><path fill="currentColor" fill-rule="evenodd" d="M1.200 0h10.600v6q0 1.200 1.200 1.200H19v16.600q0 1.200-1.200 1.200H1.200Q0 25 0 23.800V1.200Q0 0 1.200 0zM4.800 11v1.800h9.400V11zm0 3.100v1.800h9.400v-1.800zm0 3.200v1.800h9.400v-1.800z"/><path fill="currentColor" d="M13.300.2q.7.300 1.400 1l3.100 3.100q.7.700 1 1.400h-5.500z"/></svg>
<div class="c" style="left:50px">LICENSE_AFL.txt</div>
<div class="c" style="left:765px">10.18 KB</div>
<div class="c" style="left:890px">Sep 15, 2017, 6:27 PM</div>
<div class="c" style="left:1140px">text/plain</div>
<div class="c" style="left:1365px">0644</div>
</div>
<div class="abs row odd" style="top:794px;height:39px">
<div style="position:absolute;left:0;top:0;width:100%;height:1px;background:#ddd"></div>
<svg width="19.1" height="24.7" viewBox="0.00 0.00 19.00 25.00" preserveAspectRatio="none" style="position:absolute;left:6.4px;top:6.95px;color:#7f63a3;"><path fill="currentColor" fill-rule="evenodd" d="M1.200 0h10.600v6q0 1.200 1.200 1.200H19v16.600q0 1.200-1.200 1.200H1.200Q0 25 0 23.800V1.200Q0 0 1.200 0zM4.800 11v1.800h9.400V11zm0 3.100v1.800h9.400v-1.800zm0 3.200v1.800h9.400v-1.800z"/><path fill="currentColor" d="M13.300.2q.7.300 1.400 1l3.100 3.100q.7.700 1 1.400h-5.500z"/></svg>
<div class="c" style="left:50px">mage</div>
<div class="c" style="left:765px">2.19 KB</div>
<div class="c" style="left:890px">Sep 15, 2017, 6:27 PM</div>
<div class="c" style="left:1140px">text/x-generic</div>
<div class="c" style="left:1365px">0644</div>
</div>
<div class="abs row" style="top:833px;height:39px">
<svg width="19.1" height="24.7" viewBox="0.00 0.00 19.00 25.00" preserveAspectRatio="none" style="position:absolute;left:6.4px;top:6.70px;color:#7f63a3;"><path fill="currentColor" fill-rule="evenodd" d="M1.200 0h10.600v6q0 1.200 1.200 1.200H19v16.600q0 1.200-1.200 1.200H1.200Q0 25 0 23.800V1.200Q0 0 1.200 0zM4.800 11v1.800h9.400V11zm0 3.100v1.800h9.400v-1.800zm0 3.200v1.800h9.400v-1.800z"/><path fill="currentColor" d="M13.300.2q.7.300 1.400 1l3.100 3.100q.7.700 1 1.400h-5.500z"/></svg>
<div class="c" style="left:50px">php.ini.sample</div>
<div class="c" style="left:765px">886 bytes</div>
<div class="c" style="left:890px">Sep 15, 2017, 6:27 PM</div>
<div class="c" style="left:1140px">text/x-generic</div>
<div class="c" style="left:1365px">0644</div>
</div>
<div class="abs row odd" style="top:872px;height:39px">
<svg width="19.1" height="24.7" viewBox="0.00 0.00 19.00 25.00" preserveAspectRatio="none" style="position:absolute;left:6.4px;top:6.45px;color:#7f63a3;"><path fill="currentColor" fill-rule="evenodd" d="M1.200 0h10.600v6q0 1.200 1.200 1.200H19v16.600q0 1.200-1.200 1.200H1.200Q0 25 0 23.800V1.200Q0 0 1.200 0zM4.800 11v1.800h9.400V11zm0 3.100v1.800h9.400v-1.800zm0 3.200v1.800h9.400v-1.800z"/><path fill="currentColor" d="M13.300.2q.7.300 1.400 1l3.100 3.100q.7.700 1 1.400h-5.500z"/></svg>
<div class="c" style="left:50px">RELEASE_NOTES.txt</div>
<div class="c" style="left:765px">583.36 KB</div>
<div class="c" style="left:890px">Sep 15, 2017, 6:27 PM</div>
<div class="c" style="left:1140px">text/plain</div>
<div class="c" style="left:1365px">0644</div>
</div>
<div class="abs row" style="top:911px;height:38px">
<svg width="19.1" height="24.7" viewBox="-0.10 -0.10 19.20 25.20" preserveAspectRatio="none" style="position:absolute;left:6.4px;top:6.20px;color:#6a3800;"><path fill="none" stroke="currentColor" stroke-width="2.200" stroke-linejoin="round" d="M12.300 1H2Q1 1 1 2v21q0 1 1 1h15q1 0 1-1V6.700zM12.300 1v5.700H18"/><path fill="currentColor" d="M5 1h2.200v2H5zm2.200 2h2.200v2H7.200zM5 5h2.200v2H5zm2.200 2h2.200v2H7.200z"/></svg>
<div class="c" style="left:50px">var.zip</div>
<div class="c" style="left:765px">1.2 MB</div>
<div class="c" style="left:890px">Sep 15, 2017, 6:27 PM</div>
<div class="c" style="left:1140px">package/x-generic</div>
<div class="c" style="left:1365px">0644</div>
</div>
<div class="abs" style="left:1896px;top:207px;width:3px;height:716px;background:#f1f1f1"></div>
<div class="abs" style="left:0;top:0;width:1899px;height:923px;background:rgba(204,204,204,.5)"></div>
<div class="abs" style="left:648px;top:343px;width:625px;height:282px;background:#fff;border:2px solid #cbcbcb;border-top:0"></div>
<div class="abs" style="left:648px;top:342px;width:625px;height:34px;background:#333;color:#fff;font-weight:bold;font-size:17.500px;line-height:32px;text-align:center">New Folder</div>
<div class="abs" style="left:656px;top:345px;width:42px;height:19px;border-radius:2px 2px 5px 5px;background:linear-gradient(#bdbdbd 0,#9a9a9a 28%,#3c3c3c 32%,#2d2d2d 100%);border:1px solid #222;border-top-color:#999;box-shadow:0 1px 2px rgba(0,0,0,.6)"></div>
<svg width="11" height="10" viewBox="0 0 11 10" style="position:absolute;left:670px;top:349.200px"><path d="M1.300 1l8.400 8M9.700 1L1.300 9" stroke="#fff" stroke-width="2.900" fill="none"/></svg>
<div class="abs" style="left:681px;top:392px;height:22px;line-height:22px;font-size:14.900px;font-weight:bold;color:#333">New Folder Name:</div>
<div class="abs" style="left:681px;top:417px;width:553px;height:43px;border:1px solid #66afe9;border-radius:5px;background:#fff;box-shadow:inset 0 1px 1px rgba(0,0,0,.075),0 0 9px rgba(102,175,233,.6)"></div>
<div class="abs" style="left:698px;top:417px;height:43px;line-height:42px;font-size:17.500px;color:#555">yedek</div>
<div class="abs" style="left:681px;top:475px;height:22px;line-height:22px;font-size:14.900px;font-weight:bold;color:#333">New Folder will be created in:</div>
<div class="abs" style="left:681px;top:501px;width:553px;height:42px;border:1px solid #ccc;border-radius:5px;background:#fff"></div>
<div class="abs" style="left:681px;top:501px;width:52px;height:42px;border:1px solid #ccc;border-radius:5px 0 0 5px;background:#eee"></div>
<svg width="20.6" height="16.5" viewBox="0.95 0.60 18.10 14.40" preserveAspectRatio="none" style="position:absolute;left:697.4px;top:512.6px;color:#333;"><path fill="currentColor" d="M10 3.300l6.400 5.300v5.700q0 .7-.7.700h-4.200v-4.300h-3v4.300H4.300q-.7 0-.7-.7V8.600z"/><path fill="currentColor" d="M10 .6q.5 0 .9.300l2.700 2.300V1.400q0-.4.400-.4h2q.4 0 .4.400v4.400l2.400 2q.4.300.1.700l-.7.800q-.3.300-.7.100L10 3 2.500 9.400q-.4.300-.7-.1l-.7-.8q-.3-.4.100-.7L9.100.9q.4-.3.900-.3z"/></svg>
<div class="abs" style="left:748px;top:501px;height:42px;line-height:41px;font-size:17.500px;color:#555">/public_html</div>
<div class="abs" style="left:1234px;top:395px;width:17px;height:167px;background:#f1f1f1"></div>
<svg width="8" height="5" viewBox="0 0 8 5" style="position:absolute;left:1238px;top:402px"><path d="M0 4.500L4 .5l4 4z" fill="#a3a3a3"/></svg>
<svg width="8" height="5" viewBox="0 0 8 5" style="position:absolute;left:1238px;top:551px"><path d="M0 .5L4 4.500l4-4z" fill="#a3a3a3"/></svg>
<div class="abs" style="left:650px;top:581px;width:621.500px;height:42px;background:#eeeeee;border-top:1px solid #d6d6d6"></div>
<div class="abs" style="left:1056px;top:590px;width:147px;height:25px;border:2px solid;border-color:#fbfbfb #7b7b7b #7b7b7b #fbfbfb;background:#efefef;box-shadow:0 0 0 .5px #999;font-family:'DejaVu Sans',sans-serif;color:#333;text-align:center;font-weight:bold;font-size:13.300px;line-height:21px">Create New Folder</div>
<div class="abs" style="left:1209px;top:590px;width:54px;height:25px;border:2px solid;border-color:#fbfbfb #7b7b7b #7b7b7b #fbfbfb;background:#efefef;box-shadow:0 0 0 .5px #999;font-family:'DejaVu Sans',sans-serif;color:#333;text-align:center;font-size:13.100px;line-height:21px">Cancel</div>
<svg width="1899" height="923" viewBox="0 0 1899 923" style="position:absolute;left:0;top:0;pointer-events:none"><g fill="#f40808" stroke="#f40808" stroke-linecap="round"><path stroke-width="3" d="M129.500 158.500L130.400 110"/><path stroke="none" d="M130.600 97.800L135.200 112.800H125.800z"/><path stroke-width="3" d="M619.500 439.300H672"/><path stroke="none" d="M685.200 439.300L670.500 444V434.600z"/><path stroke-width="3" d="M1138.500 678.500V630"/><path stroke="none" d="M1138.500 618.200L1143.200 632.500H1133.800z"/></g></svg>
</body></html>
